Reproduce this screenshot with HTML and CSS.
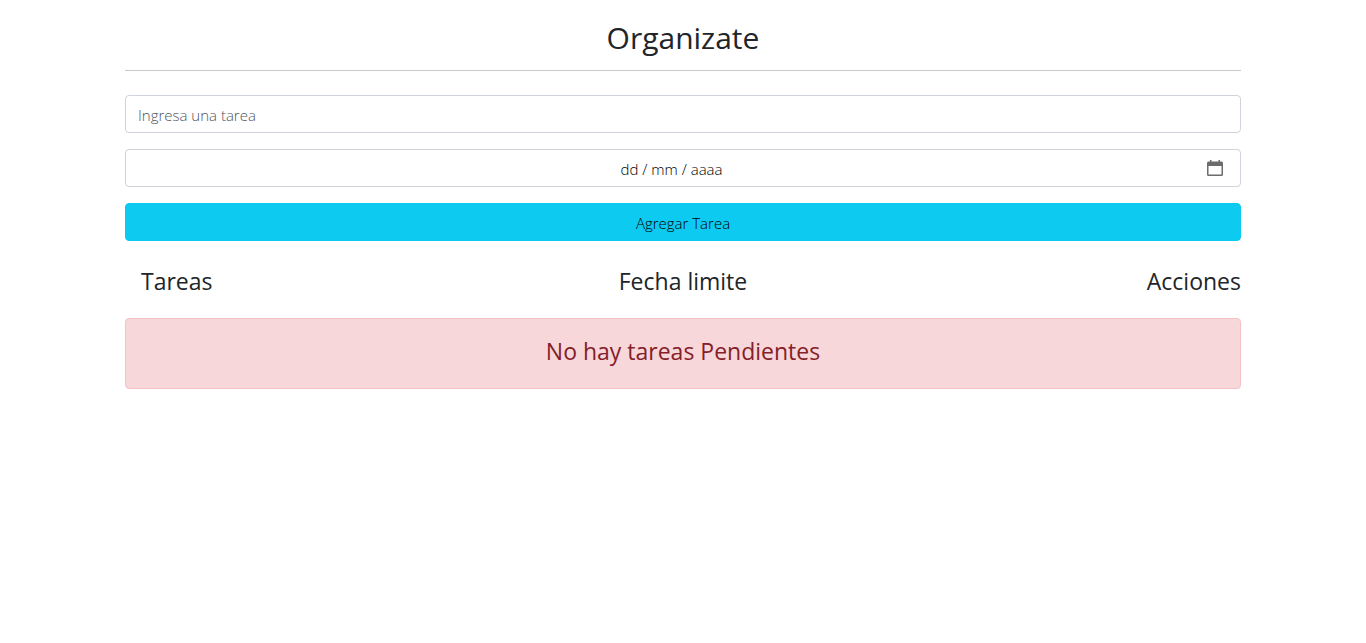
FILE: index.html
```html
<!DOCTYPE html>
<html lang="es">
<head>
<meta charset="utf-8">
<title>Organizate</title>
<link rel="stylesheet" href="styles.css">
</head>
<body>
<main class="container">
  <h1 class="title">Organizate</h1>
  <hr class="divider">
  <form class="form">
    <input class="field" type="text" placeholder="Ingresa una tarea" aria-label="Tarea">
    <div class="field date">
      <input class="date-input" type="text" value="dd / mm / aaaa" aria-label="Fecha limite">
      <button class="picker" type="button" aria-label="Abrir calendario">
        <svg width="16" height="16" viewBox="0 0 16 16" aria-hidden="true"><path fill="#6c6c6c" fill-rule="evenodd" d="M3 0h1.500v1.500h7V0H13v1.500h1.500A1.500 1.500 0 0 1 16 3v11.500a1.500 1.500 0 0 1-1.500 1.500h-13A1.500 1.500 0 0 1 0 14.500V3a1.500 1.500 0 0 1 1.500-1.500H3zM1.500 6v8a.6.6 0 0 0 .6.6h11.800a.6.6 0 0 0 .6-.6V6z"/></svg>
      </button>
    </div>
    <button class="submit" type="button">Agregar Tarea</button>
  </form>
  <div class="heads">
    <h2 class="head head-first">Tareas</h2>
    <h2 class="head">Fecha limite</h2>
    <h2 class="head head-last">Acciones</h2>
  </div>
  <div class="alert" role="alert"><h2 class="head">No hay tareas Pendientes</h2></div>
</main>
</body>
</html>
```
FILE: styles.css
```css
* { box-sizing: border-box; }
body {
  margin: 0;
  background: #fff;
  color: #212529;
  font: 16px/24px "Open Sans", "Noto Sans", sans-serif;
}
.container { max-width: 1140px; margin: 0 auto; padding: 18px 12px; }
.title { margin: 0; font-size: 30px; line-height: 40px; font-weight: 400; text-align: center; }
.divider { height: 1px; margin: 12px 0 24px; border: 0; background: #c8c9ca; }
.form { display: flex; flex-direction: column; gap: 16px; }
.field {
  width: 100%;
  height: 38px;
  padding: 7px 12px 5px;
  border: 1px solid #ced4da;
  border-radius: 4px;
  background: #fff;
  color: #000;
  font: 300 15px/24px "Open Sans", "Noto Sans", sans-serif;
}
.field::placeholder { color: #4d555d; opacity: 1; }
.date { display: flex; align-items: flex-start; gap: 2px; padding-right: 17px; }
.date-input {
  flex: 1;
  min-width: 0;
  padding: 0;
  border: 0;
  color: inherit;
  font: inherit;
  text-align: center;
}
.picker { display: flex; margin-top: 3px; padding: 0; border: 0; background: none; }
.submit {
  height: 38px;
  padding: 7px 12px 5px;
  border: 1px solid #0dcaf0;
  border-radius: 4px;
  background: #0dcaf0;
  color: #000;
  font: 300 15px/24px "Open Sans", "Noto Sans", sans-serif;
}
.heads { display: grid; grid-template-columns: 1fr auto 1fr; margin: 24px 0 21px; }
.head { margin: 0; font-size: 23px; line-height: 32px; font-weight: 400; }
.head-first { padding-left: 16px; }
.head-last { text-align: right; }
.alert {
  padding: 16px 16px 21px;
  border: 1px solid #f5c2c7;
  border-radius: 4px;
  background: #f8d7da;
  color: #842029;
  text-align: center;
}
```
